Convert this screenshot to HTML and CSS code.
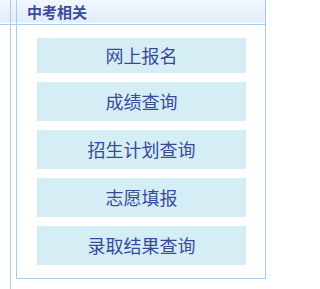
FILE: index.html
```html
<!DOCTYPE html>
<html lang="zh-CN">
<head>
<meta charset="utf-8">
<title>中考相关</title>
<link rel="stylesheet" href="styles.css">
</head>
<body>
<div class="frame">
  <div class="gutter"></div>
  <div class="spacer"></div>
  <div class="box">
    <div class="box-head">中考相关</div>
    <div class="links">
      <a class="btn first" href="#">网上报名</a>
      <a class="btn" href="#">成绩查询</a>
      <a class="btn" href="#">招生计划查询</a>
      <a class="btn" href="#">志愿填报</a>
      <a class="btn" href="#">录取结果查询</a>
    </div>
  </div>
</div>
</body>
</html>
```
FILE: styles.css
```css
html, body {
  margin: 0;
  padding: 0;
  background: #ffffff;
}
body {
  font-family: "Noto Sans CJK SC", "Noto Sans", sans-serif;
}
.frame {
  display: flex;
  align-items: flex-start;
  height: 289px;
  width: 266px;
  background-image: linear-gradient(to bottom, #f2f7fe 0px, #eaf2fc 10px, #e2ecf9 22px, #ffffff 23px, #ffffff 24px, #a9cdef 24px, #a9cdef 25px);
  background-size: 265px 25px;
  background-repeat: no-repeat;
  background-position: 0 0;
}
.gutter {
  width: 10px;
  height: 289px;
  border-right: 1px solid #a9cdef;
  flex: none;
}
.spacer {
  width: 5px;
  flex: none;
}
.box {
  flex: none;
  width: 248px;
  border-left: 1px solid #a9cdef;
  border-right: 1px solid #a9cdef;
  border-bottom: 1px solid #a9cdef;
  padding-bottom: 13px;
}
.box-head {
  height: 24px;
  line-height: 24px;
  border-bottom: 1px solid #a9cdef;
  padding-left: 10px;
  padding-bottom: 0;
  font-size: 15px;
  font-weight: bold;
  color: #3a4d9b;
}
.links {
  display: flex;
  flex-direction: column;
  padding-left: 20px;
}
.btn {
  box-sizing: border-box;
  display: flex;
  align-items: center;
  justify-content: center;
  width: 209px;
  height: 39px;
  margin-top: 9px;
  padding-bottom: 2px;
  background: #d5eef6;
  color: #3b4a98;
  font-size: 18px;
  text-decoration: none;
}
.btn.first {
  height: 35px;
  margin-top: 13px;
}
```
